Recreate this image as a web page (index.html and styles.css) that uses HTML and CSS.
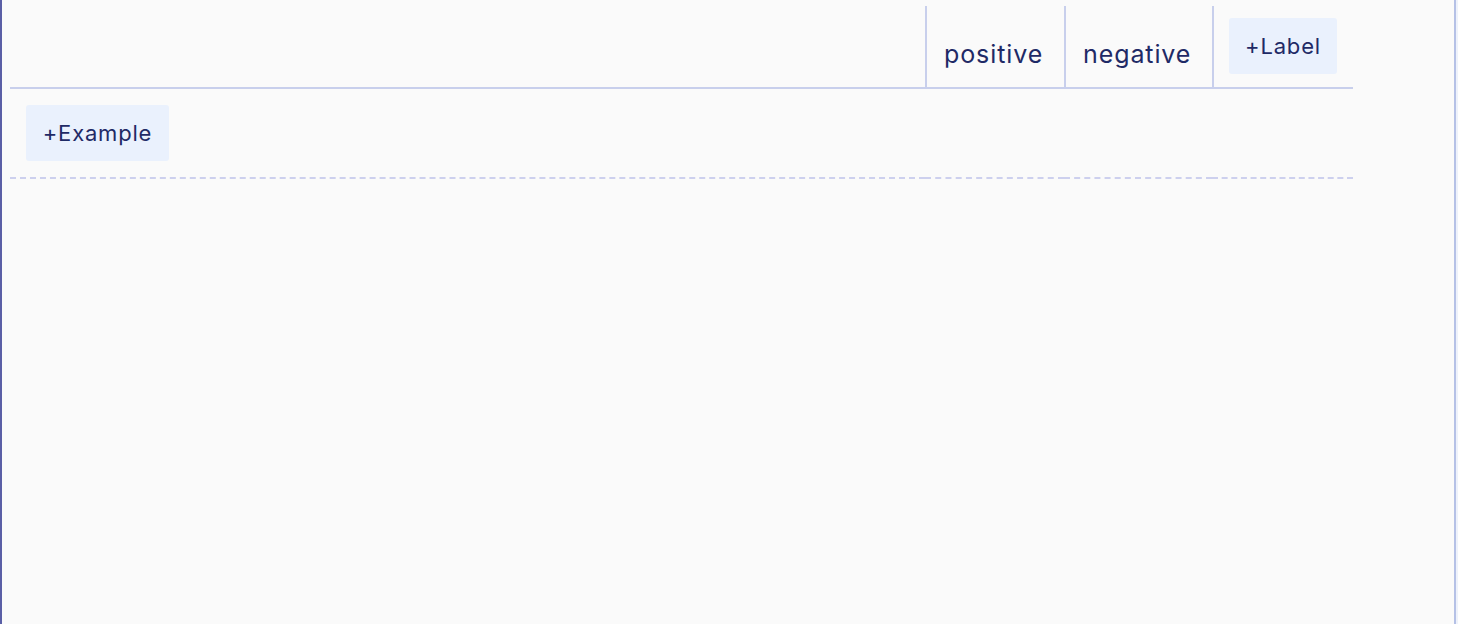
FILE: index.html
```html
<!DOCTYPE html>
<html>
<head>
<meta charset="utf-8">
<link rel="stylesheet" href="styles.css">
</head>
<body>
<div class="frame">
  <div class="panel">
    <div class="grid">
      <div class="head head-blank"></div>
      <div class="head head-label">positive</div>
      <div class="head head-label">negative</div>
      <div class="head head-add"><button class="btn btn-label">+Label</button></div>
      <div class="cell cell-first"><button class="btn btn-example">+Example</button></div>
      <div class="cell"></div>
      <div class="cell"></div>
      <div class="cell"></div>
    </div>
  </div>
</div>
</body>
</html>
```

FILE: styles.css
```css
html, body {
  margin: 0;
  padding: 0;
  background: #eef2fb;
  height: 100%;
}
body {
  font-family: Inter, "Noto Sans", sans-serif;
  color: #1f2a66;
}
.frame {
  width: 1456px;
  height: 624px;
  box-sizing: border-box;
  background: #fafafa;
  border-left: 2px solid #5a5fa6;
  border-right: 2px solid #b5c1e6;
}
.panel {
  padding: 6px 0 0 8px;
}
.grid {
  display: grid;
  grid-template-columns: 915px 139px 148px 141px;
  width: 1343px;
}
.head {
  box-sizing: border-box;
  height: 83px;
  border-bottom: 2px solid #c8cfec;
  display: flex;
  align-items: flex-end;
}
.head-label {
  border-left: 2px solid #c8cfec;
  font-size: 25px;
  letter-spacing: 0.9px;
  padding: 0 0 18px 17px;
}
.head-add {
  border-left: 2px solid #c8cfec;
  align-items: flex-start;
  padding: 12px 0 0 15px;
}
.btn {
  font-family: Inter, "Noto Sans", sans-serif;
  font-size: 22px;
  letter-spacing: 0.8px;
  color: #1f2a66;
  background: #eaf1fd;
  border: none;
  border-radius: 3px;
  padding: 0;
  height: 56px;
  cursor: pointer;
}
.btn-label {
  width: 108px;
}
.btn-example {
  width: 143px;
}
.cell {
  height: 90px;
  box-sizing: border-box;
  border-bottom: 2px dashed #cdd0ee;
}
.cell-first {
  padding: 16px 0 0 16px;
}
```
